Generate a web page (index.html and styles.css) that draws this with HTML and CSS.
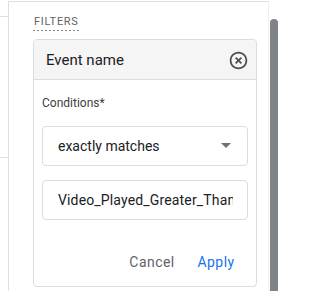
FILE: index.html
```html
<!DOCTYPE html>
<html>
<head>
<meta charset="utf-8">
<link rel="stylesheet" href="styles.css">
</head>
<body>
<div class="page">
  <div class="side">
    <div class="side-a"></div>
    <div class="side-b"></div>
  </div>
  <div class="panel">
    <div class="title">FILTERS</div>
    <div class="card">
      <div class="card-head">
        <span class="head-text">Event name</span>
        <svg class="close" viewBox="0 0 24 24" width="21" height="21"><path fill="#4a4e52" d="M14.59 8L12 10.59 9.41 8 8 9.41 10.59 12 8 14.59 9.41 16 12 13.41 14.59 16 16 14.59 13.41 12 16 9.41 14.59 8zM12 2C6.47 2 2 6.47 2 12s4.47 10 10 10 10-4.47 10-10S17.53 2 12 2zm0 18c-4.41 0-8-3.59-8-8s3.59-8 8-8 8 3.59 8 8-3.59 8-8 8z"/></svg>
      </div>
      <div class="card-body">
        <div class="label">Conditions*</div>
        <div class="select">
          <span class="select-text">exactly matches</span>
          <svg class="arrow" viewBox="0 0 10 5" width="10" height="5"><path fill="#6f7378" d="M0 0l5 5 5-5z"/></svg>
        </div>
        <div class="field">
          <div class="field-text">Video_Played_Greater_Than</div>
        </div>
        <div class="actions">
          <div class="btn btn-cancel">Cancel</div>
          <div class="btn btn-apply">Apply</div>
        </div>
      </div>
    </div>
  </div>
  <div class="scroll">
    <div class="thumb"></div>
  </div>
</div>
</body>
</html>
```
FILE: styles.css
```css
html, body {
  margin: 0;
  padding: 0;
  background: #ffffff;
}
body {
  font-family: Roboto, "Liberation Sans", sans-serif;
  color: #202124;
  overflow: hidden;
}
.page {
  display: flex;
  height: 291px;
  overflow: hidden;
}
.side {
  width: 8px;
  flex: none;
}
.side-a {
  height: 16px;
  border-bottom: 1px solid #e0e0e0;
}
.side-b {
  height: 140px;
  border-bottom: 1px solid #e0e0e0;
}
.panel {
  flex: none;
  width: 235px;
  margin-top: 1px;
  border-top: 1px solid #e0e0e0;
  border-left: 1px solid #e0e0e0;
  border-right: 1px solid #eceef0;
  padding: 8px 0 0 24px;
}
.title {
  display: inline-block;
  font-size: 11px;
  line-height: 16px;
  letter-spacing: 0.7px;
  font-weight: 400;
  color: #5f6368;
  padding-bottom: 1px;
  padding-left: 1px;
  background-image: linear-gradient(to right, #80868b 50%, transparent 50%);
  background-size: 4px 1px;
  background-repeat: repeat-x;
  background-position: left bottom;
  height: 16px;
}
.card {
  margin-top: 8px;
  width: 222px;
  border: 1px solid #dadce0;
  border-radius: 4px;
  overflow: hidden;
}
.card-head {
  height: 39px;
  background: #f5f5f5;
  border-bottom: 1px solid #dadce0;
  display: flex;
  align-items: center;
  justify-content: space-between;
  padding: 0 7px 0 12px;
}
.head-text {
  font-size: 15px;
  color: #202124;
}
.close {
  display: block;
  margin-top: 1px;
}
.card-body {
  padding: 15px 8px 6px 8px;
}
.label {
  font-size: 12px;
  line-height: 16px;
  color: #3c4043;
}
.select {
  margin-top: 15px;
  height: 38px;
  border: 1px solid #dadce0;
  border-radius: 4px;
  display: flex;
  align-items: center;
  justify-content: space-between;
  padding: 0 16px 0 15px;
}
.select-text {
  font-size: 14px;
  color: #202124;
}
.arrow {
  display: block;
  margin-top: -1px;
}
.field {
  margin-top: 14px;
  height: 38px;
  border: 1px solid #dadce0;
  border-radius: 4px;
  display: flex;
  align-items: center;
  padding: 0 14px 0 15px;
}
.field-text {
  font-size: 14px;
  letter-spacing: 0.15px;
  color: #202124;
  white-space: nowrap;
  overflow: hidden;
  width: 100%;
}
.actions {
  margin-top: 24px;
  display: flex;
  justify-content: flex-end;
}
.btn {
  min-width: 64px;
  height: 36px;
  box-sizing: border-box;
  padding: 0 8px;
  display: flex;
  align-items: center;
  justify-content: center;
  font-size: 14px;
  font-weight: 400;
  letter-spacing: 0.45px;
}
.btn-cancel {
  color: #5f6368;
}
.btn-apply {
  color: #1a73e8;
}
.scroll {
  flex: 1;
  padding-left: 1px;
}
.thumb {
  width: 8px;
  margin-top: 19px;
  height: 300px;
  background: #7f8388;
  border-radius: 4px 4px 0 0;
}
```
